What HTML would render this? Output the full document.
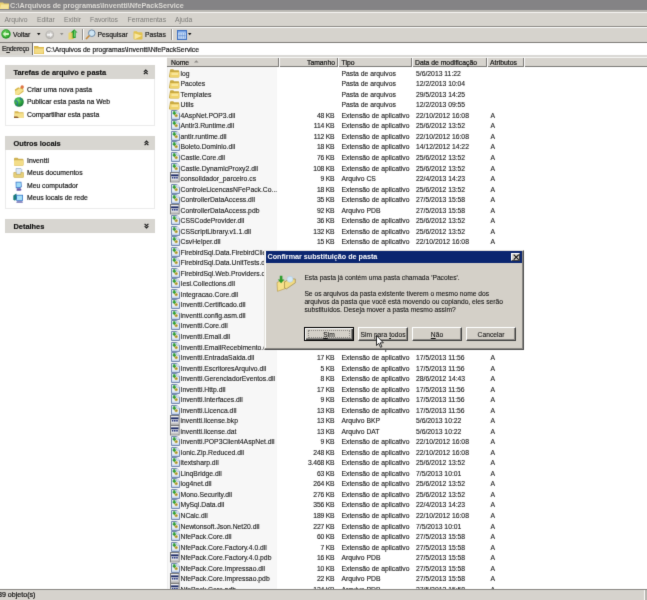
<!DOCTYPE html>
<html><head><meta charset="utf-8">
<style>
*{margin:0;padding:0;box-sizing:border-box}
html,body{width:647px;height:600px;overflow:hidden;background:#fff;font-family:"Liberation Sans",sans-serif;color:#000}
#wrap{position:absolute;left:0;top:0;width:647px;height:600px;overflow:hidden;will-change:transform;filter:url(#soft)}
.pi,.tb,.hc,#stext{-webkit-text-stroke:0.2px currentColor}
.r{-webkit-text-stroke:0.12px currentColor}
.dt,.btn{-webkit-text-stroke:0.08px currentColor}
.ab{position:absolute}
/* title */
#title{left:0;top:0;width:647px;height:10px;background:#848385}
#ttext{left:10px;top:0.7px;height:10px;line-height:10px;font-size:7.2px;font-weight:bold;color:#dddbd6;white-space:pre}
#frame{left:0;top:10px;width:647px;height:2px;background:#bdbbb6}
#menubar{left:0;top:12px;width:647px;height:14px;background:#d6d3cd;border-top:1px solid #f4f3f0}
.mi{position:absolute;top:13px;height:14px;line-height:14px;font-size:6.8px;color:#7b7a77;white-space:pre}
#sep1{left:0;top:26px;width:647px;height:1px;background:#8c8a86}
#sep1b{left:0;top:27px;width:647px;height:1px;background:#fbfbfa}
#toolbar{left:0;top:28px;width:647px;height:14px;background:#d6d3cd}
.tb{position:absolute;top:28px;height:14px;line-height:14px;font-size:6.8px;color:#1a1a1a;white-space:pre}
#sep2{left:0;top:42px;width:647px;height:1px;background:#7e7c78}
#addrbar{left:0;top:43px;width:647px;height:12px;background:#d6d3cd}
#addrbox{left:32px;top:43px;width:615px;height:12px;background:#fff;border-left:1px solid #6a6a6a}
#sep3{left:0;top:55px;width:647px;height:1.5px;background:#d9d8d5}
/* left pane */
.ph{position:absolute;left:5.3px;width:150px;height:14px;background:#d8d6d1}
.ph span{position:absolute;left:8.2px;top:1px;-webkit-text-stroke:0.15px #111;line-height:14px;font-size:7.4px;font-weight:bold;color:#111;white-space:pre}
.pb{position:absolute;left:5.3px;width:150px;background:#fff;border:1px solid #ececec;border-top:none}
.pi{position:absolute;left:27px;height:12px;line-height:12px;font-size:6.8px;color:#1c1c1c;white-space:pre}
.chev{position:absolute;left:141px;width:8px;height:8px}
/* list */
#lhead{left:167px;top:57px;width:480px;height:10px;background:#d6d3cd;border-top:1px solid #f5f5f3;border-bottom:1.4px solid #7b7a77}
.hc{position:absolute;top:58px;height:10px;line-height:10px;font-size:6.8px;color:#111;white-space:pre}
.hs{position:absolute;top:57.5px;width:2px;height:9px;background:#7e7c78;border-right:1px solid #fbfbfa}
#sortcol{left:167px;top:67px;width:110px;height:522px;background:#f7f7f7}
#lline{left:167px;top:67px;width:1px;height:522px;background:#efefef}
.r{position:absolute;left:167px;width:480px;height:10.53px;line-height:10.53px;font-size:6.8px;color:#1a1a1a;white-space:pre}
.r span{position:absolute;top:0;transform:translateY(-0.5px) scaleY(1.12);transform-origin:0 2.65px}
.r .n{left:13.5px}
.r .s{right:312.6px;text-align:right;letter-spacing:-0.2px}
.r .t{left:174.5px}
.r .d{left:249px}
.r .a{left:323.5px}
.ic{position:absolute;display:block}
.fo{left:4px;width:8.5px;height:7px;background:#eed78a;border:1px solid #c9a93f;border-radius:1.5px}
.fo::before{content:"";position:absolute;left:-1px;top:-2.5px;width:4px;height:2.5px;background:#e4c86c;border-radius:1px 1px 0 0}
.dl{left:4.3px;width:7.5px;height:9px;background:#eaf2fa;border:1px solid #7d8fb0}
.dl b{position:absolute;left:0.5px;top:0.5px;width:3.2px;height:3.2px;background:#2f9e3a;border-radius:50%}
.dl u{position:absolute;left:2px;top:3px;width:3.5px;height:3px;background:#b9ab55;border-radius:50%}
.pd{left:3.5px;width:8.5px;height:9px;background:#fff;border:1px solid #7f7f80}
.pd b{position:absolute;left:0.5px;top:2px;width:6.5px;height:2px;background:#1f2f6a}
/* status */
#status{left:0;top:589px;width:647px;height:11px;background:#d6d3cd;border-top:1px solid #8a8884}
#stext{left:-2px;top:590.3px;height:10px;line-height:10px;font-size:7.1px;color:#111;white-space:pre}
/* dialog */
#dlg{left:264.4px;top:249.8px;width:259.6px;height:100.2px;background:#d4d0c8;border:1px solid;border-color:#e6e4df #505050 #505050 #e6e4df;box-shadow:inset -1px -1px 0 #8a8884, inset 1px 1px 0 #fff}
#dtitle{left:265.6px;top:251px;width:256.5px;height:11.8px;background:#0b2670}
#dttext{left:267.5px;top:251px;height:11px;line-height:11px;font-size:7.2px;font-weight:bold;color:#fff;white-space:pre}
#dclose{left:511px;top:252.5px;width:9px;height:8px;background:#d4d0c8;border:1px solid;border-color:#fff #404040 #404040 #fff}
.dt{position:absolute;left:304.4px;font-size:6.7px;line-height:7.95px;color:#111;white-space:pre}
.btn{position:absolute;top:327.1px;width:50px;height:14.3px;background:#d4d0c8;border:1px solid;border-color:#fff #404040 #404040 #fff;box-shadow:inset -1px -1px 0 #8a8884;font-size:6.7px;line-height:13.4px;text-align:center;color:#111;white-space:pre}
</style></head><body><svg width="0" height="0" style="position:absolute"><filter id="soft" x="0" y="0" width="100%" height="100%" color-interpolation-filters="sRGB"><feConvolveMatrix order="3" kernelMatrix="0.01 0.08 0.01 0.08 0.64 0.08 0.01 0.08 0.01" edgeMode="duplicate"/></filter></svg><div id="wrap">
<div id="title" class="ab"></div>
<svg class="ab" style="left:0;top:1px" width="9" height="8" viewBox="0 0 9 8"><path d="M0 1.5h3l1 1h5v5.5h-9z" fill="#e9cf6e"/><path d="M1 3.5h8l-1 4.5h-8z" fill="#f6e49a"/></svg>
<div id="ttext" class="ab">C:\Arquivos de programas\Inventti\NfePackService</div>
<div id="frame" class="ab"></div>
<div id="menubar" class="ab"></div>
<div class="mi" style="left:4.4px">Arquivo</div>
<div class="mi" style="left:37px">Editar</div>
<div class="mi" style="left:64px">Exibir</div>
<div class="mi" style="left:90px">Favoritos</div>
<div class="mi" style="left:127.5px">Ferramentas</div>
<div class="mi" style="left:175px">Ajuda</div>
<div id="sep1" class="ab"></div><div id="sep1b" class="ab"></div>
<div id="toolbar" class="ab"></div>
<!-- back -->
<svg class="ab" style="left:1px;top:29.3px" width="10" height="10" viewBox="0 0 10 10"><circle cx="5" cy="5" r="4.7" fill="#2b9a2b"/><circle cx="4.6" cy="4.4" r="3.4" fill="#4fbf45"/><path d="M1.8 5L4.6 2.3v1.7h3.3v2h-3.3v1.7z" fill="#d8f8c8"/></svg>
<div class="tb" style="left:13px">Voltar</div>
<svg class="ab" style="left:36.5px;top:33px" width="4" height="3"><path d="M0 0h3.5l-1.75 2.2z" fill="#111"/></svg>
<svg class="ab" style="left:44.8px;top:29.8px" width="9.5" height="9.5" viewBox="0 0 10 10"><circle cx="5" cy="5" r="4.6" fill="#b5b3af"/><circle cx="5" cy="4.6" r="3.5" fill="#c9c7c3"/><path d="M8.2 5L5.4 2.3v1.7h-3.3v2h3.3v1.7z" fill="#f4f4f4"/></svg>
<svg class="ab" style="left:59.5px;top:33.3px" width="4" height="3"><path d="M0 0h3.5l-1.75 2.2z" fill="#8e8c88"/></svg>
<svg class="ab" style="left:67.5px;top:28.8px" width="10" height="11" viewBox="0 0 10 11"><path d="M0.5 4l3-1.2v7.4l-3 .6z" fill="#e9d56e"/><path d="M3.5 2.8l2.5 1v6l-2.5.4z" fill="#d6be4a"/><path d="M6.2 0.3l3.3 3.3h-1.8v5.5h-3v-5.5h-1.8z" fill="#1f9a2a"/><path d="M6.2 1.3l2 2h-1v4.5h-1.4z" fill="#6fd06a"/></svg>
<div class="ab" style="left:81.5px;top:29px;width:2px;height:11px;background:#8f8d89;border-right:1px solid #fff"></div>
<svg class="ab" style="left:85px;top:29px" width="11" height="11" viewBox="0 0 11 11"><circle cx="6.8" cy="4.2" r="3.3" fill="#cfe6f5" stroke="#6e8aa6" stroke-width="1"/><path d="M4.5 6.5L1 10" stroke="#c58a3a" stroke-width="1.6"/></svg>
<div class="tb" style="left:97.5px">Pesquisar</div>
<svg class="ab" style="left:132.5px;top:29.5px" width="10" height="10" viewBox="0 0 10 10"><path d="M.5 2.2q0-.9.9-.9h2.4l1 1h3.8q.9 0 .9.9v5.4q0 .9-.9.9h-7.2q-.9 0-.9-.9z" fill="#e2c24e"/><path d="M1.5 3.2l7.5 2.6-7.5 3.4z" fill="#f8e7a0"/></svg>
<div class="tb" style="left:145px">Pastas</div>
<div class="ab" style="left:171px;top:29px;width:2px;height:11px;background:#8f8d89;border-right:1px solid #fff"></div>
<svg class="ab" style="left:176.5px;top:29.5px" width="10" height="10" viewBox="0 0 10 10"><rect x=".5" y=".5" width="9" height="9" fill="#7aa6e6" stroke="#3d6fc0"/><rect x="1.3" y="2.6" width="7.4" height="6.1" fill="#d7e8fb"/><path d="M3 3v5.5M5.2 3v5.5M7.3 3v5.5M1.5 5.7h7" stroke="#5a88d0" stroke-width=".7"/></svg>
<svg class="ab" style="left:188px;top:33px" width="4" height="3"><path d="M0 0h3.5l-1.75 2.2z" fill="#111"/></svg>
<div id="sep2" class="ab"></div>
<div id="addrbar" class="ab"></div>
<div class="tb" style="left:2px;top:43.3px;height:12px;line-height:12px;letter-spacing:-0.25px">E<u>n</u>dereço</div>
<div id="addrbox" class="ab"></div>
<svg class="ab" style="left:34px;top:44.5px" width="10" height="9" viewBox="0 0 10 9"><path d="M0 1h4l1 1h5v7h-10z" fill="#dcb94c"/><path d="M0.5 3.5h9.5l-1 5h-8.5z" fill="#f3dc86"/></svg>
<div class="tb" style="left:46px;top:43.8px;height:12px;line-height:12px">C:\Arquivos de programas\Inventti\NfePackService</div>
<div id="sep3" class="ab"></div>

<!-- left pane -->
<div class="ph" style="top:64.6px"><span>Tarefas de arquivo e pasta</span></div>
<svg class="ab" style="left:143px;top:68.5px" width="5.5" height="6" viewBox="0 0 5 6"><path d="M.6 2.8L2.5 1 4.4 2.8M.6 5.2L2.5 3.4 4.4 5.2" stroke="#1a1a1a" stroke-width="1.15" fill="none"/></svg>
<div class="pb" style="top:78.6px;height:47.9px"></div>
<svg class="ab" style="left:13.5px;top:84.5px" width="10.5" height="10.5" viewBox="0 0 10.5 10.5"><path d="M0.8 4.5l3.5-2.2 1.2.6 3.2-1.6 1 5.2-5.2 3.8-2.6.5z" fill="#d8b84e"/><path d="M1.2 6.2l4.5-3 3.8 1.8-5 4.6-2.8.6z" fill="#f6e391"/><circle cx="8.2" cy="2" r="1.7" fill="#df7445"/></svg>
<div class="pi" style="top:83.7px">Criar uma nova pasta</div>
<svg class="ab" style="left:13.8px;top:97px" width="10" height="10" viewBox="0 0 10 10"><defs><radialGradient id="gl" cx=".4" cy=".35" r=".7"><stop offset="0" stop-color="#6fd86a"/><stop offset=".6" stop-color="#2aa03a"/><stop offset="1" stop-color="#136a3a"/></radialGradient></defs><circle cx="5" cy="5" r="4.8" fill="url(#gl)"/><path d="M0.6 4.2c1.2-1 2.5-.2 3 1s-.5 2.5-1.2 3.8M6.5 .6c-.5 1.2.3 2 1.5 2.3" stroke="#2a6fa8" stroke-width="1.2" fill="none" opacity=".8"/></svg>
<div class="pi" style="top:96.2px">Publicar esta pasta na Web</div>
<svg class="ab" style="left:13.5px;top:109.5px" width="10" height="9" viewBox="0 0 10 9"><path d="M0.5 1.2h3.5l1 1h4.5v5.8h-9z" fill="#d8b650"/><path d="M0.8 3.3h8.9l-.5 4.7h-8.4z" fill="#f5e08c"/><path d="M0 6.6h3.2l1.8 1.4h-5z" fill="#8a5a2a"/></svg>
<div class="pi" style="top:108.7px">Compartilhar esta pasta</div>

<div class="ph" style="top:136px"><span>Outros locais</span></div>
<svg class="ab" style="left:143.5px;top:140.2px" width="5" height="6" viewBox="0 0 5 6"><path d="M.6 2.8L2.5 1 4.4 2.8M.6 5.2L2.5 3.4 4.4 5.2" stroke="#1a1a1a" stroke-width="1.15" fill="none"/></svg>
<div class="pb" style="top:150px;height:59px"></div>
<svg class="ab" style="left:13.3px;top:156.5px" width="11" height="9" viewBox="0 0 11 9"><path d="M1 1.7q0-1 1-1h2.5l1 1h3.8q1.2 0 1.2 1.2v4.8q0 1-1 1h-7.5q-1 0-1-1z" fill="#cfb254"/><path d="M1.8 3.2h7.6q1 0 1 .9v3.6q0 .8-.8.8h-7.8q-.8 0-.8-.8v-3.6q0-.9.8-.9z" fill="#f3dd88"/></svg>
<div class="pi" style="top:155.2px">Inventti</div>
<svg class="ab" style="left:13.3px;top:167.5px" width="11" height="10" viewBox="0 0 11 10"><path d="M3 .5h5l.8.8v5h-5.8z" fill="#dfeaf5" stroke="#8aa4c0" stroke-width=".6"/><path d="M.8 4.5h2.4v2h4.6v-2h2.4q.5 0 .5.6v3.6q0 .8-.8.8h-8.4q-.8 0-.8-.8v-3.6q0-.6.6-.6z" fill="#e6cf78" stroke="#c3a445" stroke-width=".5"/></svg>
<div class="pi" style="top:166.7px">Meus documentos</div>
<svg class="ab" style="left:15.3px;top:180.8px" width="7.5" height="10" viewBox="0 0 7.5 10"><path d="M.6 .8h5.8l.4 5.2-2.2 1.2h-3.8z" fill="#3b74c8"/><path d="M1.4 1.6h4.4l.2 3.8-1.6.9h-3z" fill="#9fdcf8"/><path d="M1.8 7.2h3.8l1 1.8-1.2.8h-3.8z" fill="#6a5aa8"/></svg>
<div class="pi" style="top:179.7px">Meu computador</div>
<svg class="ab" style="left:13.3px;top:193px" width="10.5" height="10" viewBox="0 0 10.5 10"><path d="M.3 2.5l3-2 1 5-2.5 2.2-1.5-1.5z" fill="#1a7a7a"/><path d="M3.2 1.8h6.8v6h-6.8z" fill="#3a78c8"/><path d="M4 2.6h5.2v4.4h-5.2z" fill="#a6e0f8"/><path d="M3.8 8.2h5.6l.5 1.5h-6.6z" fill="#6a6ab0"/></svg>
<div class="pi" style="top:192.2px">Meus locais de rede</div>

<div class="ph" style="top:219px"><span>Detalhes</span></div>
<svg class="ab" style="left:143.5px;top:223.2px" width="5" height="6" viewBox="0 0 5 6"><path d="M.6 .8L2.5 2.6 4.4 .8M.6 3.2L2.5 5 4.4 3.2" stroke="#1a1a1a" stroke-width="1.15" fill="none"/></svg>

<!-- list -->
<div id="sortcol" class="ab"></div>
<div id="lline" class="ab"></div>
<div id="lhead" class="ab"></div>
<div class="hc" style="left:171px">Nome</div>
<svg class="ab" style="left:193.5px;top:60px" width="5" height="3"><path d="M0 2.6h4.6l-2.3-2.4z" fill="#8a8884"/></svg>
<div class="hs" style="left:277.5px"></div>
<div class="hc" style="left:307px">Tamanho</div>
<div class="hs" style="left:337px"></div>
<div class="hc" style="left:341.5px">Tipo</div>
<div class="hs" style="left:411px"></div>
<div class="hc" style="left:415px">Data de modificação</div>
<div class="hs" style="left:486px"></div>
<div class="hc" style="left:490px">Atributos</div>
<div class="hs" style="left:523px"></div>
<svg width="0" height="0" style="position:absolute">
<defs>
<symbol id="fo" viewBox="0 0 11 10"><path d="M1 2.2q0-1 1-1h2.2l1 1h4q1 0 1 1v5.3q0 1-1 1h-8.2q-1 0-1-1z" fill="#c9a940"/><path d="M1.8 4h7.8q.8 0 .8.8v3.6q0 .8-.8.8h-7.8q-.8 0-.8-.8v-3.6q0-.8.8-.8z" fill="#efd26a"/><path d="M2.5 4.8h6.5v2.2h-6.5z" fill="#f9e69a"/></symbol>
<symbol id="dl" viewBox="0 0 9 10"><path d="M.5 .5h5.3l2.7 2.7v6.3h-8z" fill="#e9f2fb" stroke="#7489b0" stroke-width="1"/><path d="M5.8 .5v2.7h2.7" fill="#fff" stroke="#8aa0c8" stroke-width=".6"/><path d="M1 7.6h7v1.4h-7z" fill="#c8d6ec"/><path d="M2.2 1.2h2.2v1.6h1.2l-2.3 2.4-2.3-2.4h1.2z" fill="#2e9e34"/><circle cx="5.2" cy="5.6" r="1.7" fill="#c8b048"/><circle cx="5.2" cy="5.6" r=".7" fill="#8a7a30"/></symbol>
<symbol id="pd" viewBox="0 0 10 11"><rect x=".5" y=".5" width="8.6" height="9.4" fill="#f2f2f2" stroke="#7a7a7a" stroke-width="1"/><rect x="1.1" y="2.4" width="7.4" height="1.9" fill="#1c2a66"/><rect x="1.8" y="5" width="1.6" height="1.6" fill="#2c3c82"/><rect x="4" y="5" width="1.6" height="1.6" fill="#2c3c82"/><rect x="6.2" y="5" width="1.6" height="1.6" fill="#2c3c82"/><path d="M1.1 7.6h7.4v1.7h-7.4z" fill="#c4c4c4"/></symbol>
</defs></svg>
<div class="r" style="top:68.73px"><svg class="ic" style="left:1.8px;top:-0.5px" width="11" height="10"><use href="#fo"/></svg><span class="n">log</span><span class="s"></span><span class="t">Pasta de arquivos</span><span class="d">5/6/2013 11:22</span><span class="a"></span></div>
<div class="r" style="top:79.27px"><svg class="ic" style="left:1.8px;top:-0.5px" width="11" height="10"><use href="#fo"/></svg><span class="n">Pacotes</span><span class="s"></span><span class="t">Pasta de arquivos</span><span class="d">12/2/2013 10:04</span><span class="a"></span></div>
<div class="r" style="top:89.80px"><svg class="ic" style="left:1.8px;top:-0.5px" width="11" height="10"><use href="#fo"/></svg><span class="n">Templates</span><span class="s"></span><span class="t">Pasta de arquivos</span><span class="d">29/5/2013 14:25</span><span class="a"></span></div>
<div class="r" style="top:100.33px"><svg class="ic" style="left:1.8px;top:-0.5px" width="11" height="10"><use href="#fo"/></svg><span class="n">Utils</span><span class="s"></span><span class="t">Pasta de arquivos</span><span class="d">12/2/2013 09:55</span><span class="a"></span></div>
<div class="r" style="top:110.86px"><svg class="ic" style="left:3.8px;top:-1px" width="9" height="10"><use href="#dl"/></svg><span class="n">4AspNet.POP3.dll</span><span class="s">48 KB</span><span class="t">Extensão de aplicativo</span><span class="d">22/10/2012 16:08</span><span class="a">A</span></div>
<div class="r" style="top:121.39px"><svg class="ic" style="left:3.8px;top:-1px" width="9" height="10"><use href="#dl"/></svg><span class="n">Antlr3.Runtime.dll</span><span class="s">114 KB</span><span class="t">Extensão de aplicativo</span><span class="d">25/6/2012 13:52</span><span class="a">A</span></div>
<div class="r" style="top:131.92px"><svg class="ic" style="left:3.8px;top:-1px" width="9" height="10"><use href="#dl"/></svg><span class="n">antlr.runtime.dll</span><span class="s">112 KB</span><span class="t">Extensão de aplicativo</span><span class="d">22/10/2012 16:08</span><span class="a">A</span></div>
<div class="r" style="top:142.44px"><svg class="ic" style="left:3.8px;top:-1px" width="9" height="10"><use href="#dl"/></svg><span class="n">Boleto.Dominio.dll</span><span class="s">18 KB</span><span class="t">Extensão de aplicativo</span><span class="d">14/12/2012 14:22</span><span class="a">A</span></div>
<div class="r" style="top:152.98px"><svg class="ic" style="left:3.8px;top:-1px" width="9" height="10"><use href="#dl"/></svg><span class="n">Castle.Core.dll</span><span class="s">76 KB</span><span class="t">Extensão de aplicativo</span><span class="d">25/6/2012 13:52</span><span class="a">A</span></div>
<div class="r" style="top:163.50px"><svg class="ic" style="left:3.8px;top:-1px" width="9" height="10"><use href="#dl"/></svg><span class="n">Castle.DynamicProxy2.dll</span><span class="s">108 KB</span><span class="t">Extensão de aplicativo</span><span class="d">25/6/2012 13:52</span><span class="a">A</span></div>
<div class="r" style="top:174.04px"><svg class="ic" style="left:3px;top:-1.6px" width="10" height="11"><use href="#pd"/></svg><span class="n">consolidador_parceiro.cs</span><span class="s">9 KB</span><span class="t">Arquivo CS</span><span class="d">22/4/2013 14:23</span><span class="a">A</span></div>
<div class="r" style="top:184.56px"><svg class="ic" style="left:3.8px;top:-1px" width="9" height="10"><use href="#dl"/></svg><span class="n">ControleLicencasNFePack.Co...</span><span class="s">18 KB</span><span class="t">Extensão de aplicativo</span><span class="d">25/6/2012 13:52</span><span class="a">A</span></div>
<div class="r" style="top:195.09px"><svg class="ic" style="left:3.8px;top:-1px" width="9" height="10"><use href="#dl"/></svg><span class="n">ControllerDataAccess.dll</span><span class="s">35 KB</span><span class="t">Extensão de aplicativo</span><span class="d">27/5/2013 15:58</span><span class="a">A</span></div>
<div class="r" style="top:205.62px"><svg class="ic" style="left:3px;top:-1.6px" width="10" height="11"><use href="#pd"/></svg><span class="n">ControllerDataAccess.pdb</span><span class="s">92 KB</span><span class="t">Arquivo PDB</span><span class="d">27/5/2013 15:58</span><span class="a">A</span></div>
<div class="r" style="top:216.16px"><svg class="ic" style="left:3.8px;top:-1px" width="9" height="10"><use href="#dl"/></svg><span class="n">CSSCodeProvider.dll</span><span class="s">36 KB</span><span class="t">Extensão de aplicativo</span><span class="d">25/6/2012 13:52</span><span class="a">A</span></div>
<div class="r" style="top:226.69px"><svg class="ic" style="left:3.8px;top:-1px" width="9" height="10"><use href="#dl"/></svg><span class="n">CSScriptLibrary.v1.1.dll</span><span class="s">132 KB</span><span class="t">Extensão de aplicativo</span><span class="d">25/6/2012 13:52</span><span class="a">A</span></div>
<div class="r" style="top:237.22px"><svg class="ic" style="left:3.8px;top:-1px" width="9" height="10"><use href="#dl"/></svg><span class="n">CsvHelper.dll</span><span class="s">15 KB</span><span class="t">Extensão de aplicativo</span><span class="d">22/10/2012 16:08</span><span class="a">A</span></div>
<div class="r" style="top:247.75px"><svg class="ic" style="left:3.8px;top:-1px" width="9" height="10"><use href="#dl"/></svg><span class="n">FirebirdSql.Data.FirebirdClient.dll</span><span class="s">548 KB</span><span class="t">Extensão de aplicativo</span><span class="d">22/10/2012 16:08</span><span class="a">A</span></div>
<div class="r" style="top:258.27px"><svg class="ic" style="left:3.8px;top:-1px" width="9" height="10"><use href="#dl"/></svg><span class="n">FirebirdSql.Data.UnitTests.dll</span><span class="s"></span><span class="t"></span><span class="d"></span><span class="a"></span></div>
<div class="r" style="top:268.81px"><svg class="ic" style="left:3.8px;top:-1px" width="9" height="10"><use href="#dl"/></svg><span class="n">FirebirdSql.Web.Providers.dll</span><span class="s"></span><span class="t"></span><span class="d"></span><span class="a"></span></div>
<div class="r" style="top:279.34px"><svg class="ic" style="left:3.8px;top:-1px" width="9" height="10"><use href="#dl"/></svg><span class="n">Iesi.Collections.dll</span><span class="s"></span><span class="t"></span><span class="d"></span><span class="a"></span></div>
<div class="r" style="top:289.87px"><svg class="ic" style="left:3.8px;top:-1px" width="9" height="10"><use href="#dl"/></svg><span class="n">Integracao.Core.dll</span><span class="s"></span><span class="t"></span><span class="d"></span><span class="a"></span></div>
<div class="r" style="top:300.39px"><svg class="ic" style="left:3.8px;top:-1px" width="9" height="10"><use href="#dl"/></svg><span class="n">Inventti.Certificado.dll</span><span class="s"></span><span class="t"></span><span class="d"></span><span class="a"></span></div>
<div class="r" style="top:310.93px"><svg class="ic" style="left:3.8px;top:-1px" width="9" height="10"><use href="#dl"/></svg><span class="n">inventti.config.asm.dll</span><span class="s"></span><span class="t"></span><span class="d"></span><span class="a"></span></div>
<div class="r" style="top:321.45px"><svg class="ic" style="left:3.8px;top:-1px" width="9" height="10"><use href="#dl"/></svg><span class="n">Inventti.Core.dll</span><span class="s"></span><span class="t"></span><span class="d"></span><span class="a"></span></div>
<div class="r" style="top:331.99px"><svg class="ic" style="left:3.8px;top:-1px" width="9" height="10"><use href="#dl"/></svg><span class="n">Inventti.Email.dll</span><span class="s"></span><span class="t"></span><span class="d"></span><span class="a"></span></div>
<div class="r" style="top:342.51px"><svg class="ic" style="left:3.8px;top:-1px" width="9" height="10"><use href="#dl"/></svg><span class="n">Inventti.EmailRecebimento.dll</span><span class="s">21 KB</span><span class="t">Extensão de aplicativo</span><span class="d">17/5/2013 11:56</span><span class="a">A</span></div>
<div class="r" style="top:353.05px"><svg class="ic" style="left:3.8px;top:-1px" width="9" height="10"><use href="#dl"/></svg><span class="n">Inventti.EntradaSaida.dll</span><span class="s">17 KB</span><span class="t">Extensão de aplicativo</span><span class="d">17/5/2013 11:56</span><span class="a">A</span></div>
<div class="r" style="top:363.57px"><svg class="ic" style="left:3.8px;top:-1px" width="9" height="10"><use href="#dl"/></svg><span class="n">Inventti.EscritoresArquivo.dll</span><span class="s">5 KB</span><span class="t">Extensão de aplicativo</span><span class="d">17/5/2013 11:56</span><span class="a">A</span></div>
<div class="r" style="top:374.11px"><svg class="ic" style="left:3.8px;top:-1px" width="9" height="10"><use href="#dl"/></svg><span class="n">Inventti.GerenciadorEventos.dll</span><span class="s">8 KB</span><span class="t">Extensão de aplicativo</span><span class="d">28/6/2012 14:43</span><span class="a">A</span></div>
<div class="r" style="top:384.63px"><svg class="ic" style="left:3.8px;top:-1px" width="9" height="10"><use href="#dl"/></svg><span class="n">Inventti.Http.dll</span><span class="s">17 KB</span><span class="t">Extensão de aplicativo</span><span class="d">17/5/2013 11:56</span><span class="a">A</span></div>
<div class="r" style="top:395.17px"><svg class="ic" style="left:3.8px;top:-1px" width="9" height="10"><use href="#dl"/></svg><span class="n">Inventti.Interfaces.dll</span><span class="s">9 KB</span><span class="t">Extensão de aplicativo</span><span class="d">17/5/2013 11:56</span><span class="a">A</span></div>
<div class="r" style="top:405.69px"><svg class="ic" style="left:3.8px;top:-1px" width="9" height="10"><use href="#dl"/></svg><span class="n">Inventti.Licenca.dll</span><span class="s">13 KB</span><span class="t">Extensão de aplicativo</span><span class="d">17/5/2013 11:56</span><span class="a">A</span></div>
<div class="r" style="top:416.22px"><svg class="ic" style="left:3px;top:-1.6px" width="10" height="11"><use href="#pd"/></svg><span class="n">inventti.license.bkp</span><span class="s">13 KB</span><span class="t">Arquivo BKP</span><span class="d">5/6/2013 10:22</span><span class="a">A</span></div>
<div class="r" style="top:426.75px"><svg class="ic" style="left:3px;top:-1.6px" width="10" height="11"><use href="#pd"/></svg><span class="n">inventti.license.dat</span><span class="s">13 KB</span><span class="t">Arquivo DAT</span><span class="d">5/6/2013 10:22</span><span class="a">A</span></div>
<div class="r" style="top:437.28px"><svg class="ic" style="left:3.8px;top:-1px" width="9" height="10"><use href="#dl"/></svg><span class="n">Inventti.POP3Client4AspNet.dll</span><span class="s">9 KB</span><span class="t">Extensão de aplicativo</span><span class="d">22/10/2012 16:08</span><span class="a">A</span></div>
<div class="r" style="top:447.81px"><svg class="ic" style="left:3.8px;top:-1px" width="9" height="10"><use href="#dl"/></svg><span class="n">Ionic.Zip.Reduced.dll</span><span class="s">248 KB</span><span class="t">Extensão de aplicativo</span><span class="d">22/10/2012 16:08</span><span class="a">A</span></div>
<div class="r" style="top:458.34px"><svg class="ic" style="left:3.8px;top:-1px" width="9" height="10"><use href="#dl"/></svg><span class="n">itextsharp.dll</span><span class="s">3.468 KB</span><span class="t">Extensão de aplicativo</span><span class="d">25/6/2012 13:52</span><span class="a">A</span></div>
<div class="r" style="top:468.88px"><svg class="ic" style="left:3.8px;top:-1px" width="9" height="10"><use href="#dl"/></svg><span class="n">LinqBridge.dll</span><span class="s">63 KB</span><span class="t">Extensão de aplicativo</span><span class="d">7/5/2013 10:01</span><span class="a">A</span></div>
<div class="r" style="top:479.40px"><svg class="ic" style="left:3.8px;top:-1px" width="9" height="10"><use href="#dl"/></svg><span class="n">log4net.dll</span><span class="s">264 KB</span><span class="t">Extensão de aplicativo</span><span class="d">25/6/2012 13:52</span><span class="a">A</span></div>
<div class="r" style="top:489.94px"><svg class="ic" style="left:3.8px;top:-1px" width="9" height="10"><use href="#dl"/></svg><span class="n">Mono.Security.dll</span><span class="s">276 KB</span><span class="t">Extensão de aplicativo</span><span class="d">25/6/2012 13:52</span><span class="a">A</span></div>
<div class="r" style="top:500.46px"><svg class="ic" style="left:3.8px;top:-1px" width="9" height="10"><use href="#dl"/></svg><span class="n">MySql.Data.dll</span><span class="s">356 KB</span><span class="t">Extensão de aplicativo</span><span class="d">22/4/2013 14:23</span><span class="a">A</span></div>
<div class="r" style="top:511.00px"><svg class="ic" style="left:3.8px;top:-1px" width="9" height="10"><use href="#dl"/></svg><span class="n">NCalc.dll</span><span class="s">189 KB</span><span class="t">Extensão de aplicativo</span><span class="d">22/10/2012 16:08</span><span class="a">A</span></div>
<div class="r" style="top:521.52px"><svg class="ic" style="left:3.8px;top:-1px" width="9" height="10"><use href="#dl"/></svg><span class="n">Newtonsoft.Json.Net20.dll</span><span class="s">227 KB</span><span class="t">Extensão de aplicativo</span><span class="d">7/5/2013 10:01</span><span class="a">A</span></div>
<div class="r" style="top:532.05px"><svg class="ic" style="left:3.8px;top:-1px" width="9" height="10"><use href="#dl"/></svg><span class="n">NfePack.Core.dll</span><span class="s">60 KB</span><span class="t">Extensão de aplicativo</span><span class="d">27/5/2013 15:58</span><span class="a">A</span></div>
<div class="r" style="top:542.58px"><svg class="ic" style="left:3.8px;top:-1px" width="9" height="10"><use href="#dl"/></svg><span class="n">NfePack.Core.Factory.4.0.dll</span><span class="s">7 KB</span><span class="t">Extensão de aplicativo</span><span class="d">27/5/2013 15:58</span><span class="a">A</span></div>
<div class="r" style="top:553.12px"><svg class="ic" style="left:3px;top:-1.6px" width="10" height="11"><use href="#pd"/></svg><span class="n">NfePack.Core.Factory.4.0.pdb</span><span class="s">16 KB</span><span class="t">Arquivo PDB</span><span class="d">27/5/2013 15:58</span><span class="a">A</span></div>
<div class="r" style="top:563.64px"><svg class="ic" style="left:3.8px;top:-1px" width="9" height="10"><use href="#dl"/></svg><span class="n">NfePack.Core.Impressao.dll</span><span class="s">10 KB</span><span class="t">Extensão de aplicativo</span><span class="d">27/5/2013 15:58</span><span class="a">A</span></div>
<div class="r" style="top:574.17px"><svg class="ic" style="left:3px;top:-1.6px" width="10" height="11"><use href="#pd"/></svg><span class="n">NfePack.Core.Impressao.pdb</span><span class="s">22 KB</span><span class="t">Arquivo PDB</span><span class="d">27/5/2013 15:58</span><span class="a">A</span></div>
<div class="r" style="top:584.70px"><svg class="ic" style="left:3px;top:-1.6px" width="10" height="11"><use href="#pd"/></svg><span class="n">NfePack.Core.pdb</span><span class="s">124 KB</span><span class="t">Arquivo PDB</span><span class="d">27/5/2013 15:58</span><span class="a">A</span></div>

<div id="status" class="ab"></div>
<div id="stext" class="ab">39 objeto(s)</div>
<div class="ab" style="left:644px;top:590px;width:3px;height:10px;background:#b8b6b1;border-left:1px solid #fafaf8"></div>

<!-- dialog -->
<div id="dlg" class="ab"></div>
<div id="dtitle" class="ab"></div>
<div id="dttext" class="ab">Confirmar substituição de pasta</div>
<div id="dclose" class="ab"></div>
<svg class="ab" style="left:512.8px;top:253.6px" width="6.4" height="6.4" viewBox="0 0 6.4 6.4"><path d="M.7 .7l5 5M5.7 .7l-5 5" stroke="#111" stroke-width="1.05"/></svg>
<svg class="ab" style="left:275.5px;top:274.5px" width="20" height="17" viewBox="0 0 20 17"><path d="M1 7.5L6 5l3.5 1.5v7L1.5 16.3z" fill="#f6e08a" stroke="#b39642" stroke-width=".6"/><path d="M8.5 7l5-3.2 5.8.2v3.8L10.5 13.8 8.5 13z" fill="#f2db82" stroke="#8f7a3a" stroke-width=".6"/><circle cx="14" cy="4.3" r="3" fill="#d2e8f7" stroke="#a8c4dc" stroke-width=".5"/><path d="M3.8 .8h2.6v3.8h2l-3.3 3.6-3.3-3.6h2z" fill="#2c9c2c"/></svg>
<div class="dt" style="top:273.75px">Esta pasta já contém uma pasta chamada 'Pacotes'.</div>
<div class="dt" style="top:290.15px">Se os arquivos da pasta existente tiverem o mesmo nome dos<br>arquivos da pasta que você está movendo ou copiando, eles serão<br>substituídos. Deseja mover a pasta mesmo assim?</div>
<div class="btn" style="left:304px;border:1px solid #000;box-shadow:inset 1px 1px 0 #fff,inset -1px -1px 0 #404040,inset -2px -2px 0 #8a8884"><span style="position:absolute;left:3px;top:2px;right:3px;bottom:2px;border:1px dotted #8a8884"></span><u>S</u>im</div>
<div class="btn" style="left:358px">Sim para <u>t</u>odos</div>
<div class="btn" style="left:412px"><u>N</u>ão</div>
<div class="btn" style="left:466px">Cancelar</div>
<!-- cursor -->
<svg class="ab" style="left:375.6px;top:335.3px" width="8" height="13" viewBox="0 0 8 13"><path d="M.5 .5v10l2.3-2.2 1.7 4 1.4-.6-1.7-3.9h3.2z" fill="#fff" stroke="#000" stroke-width=".8"/></svg>
</div></body></html>
